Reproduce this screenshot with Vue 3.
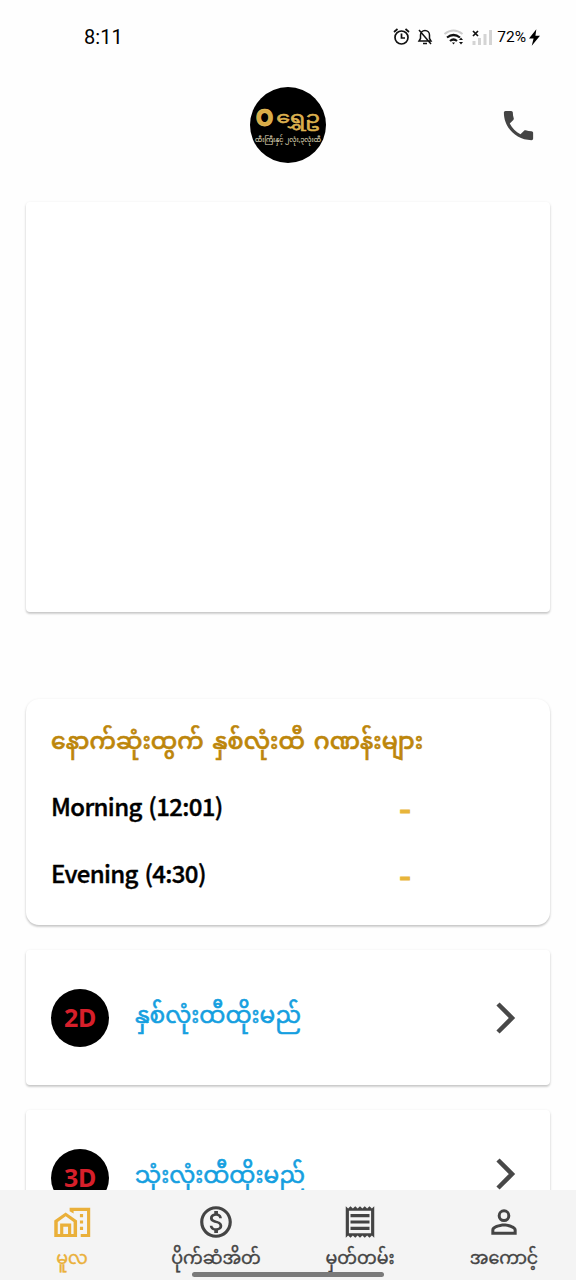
<script setup>
import { ref } from "vue";

const active = ref("home");

const results = [
  { label: "Morning (12:01)", value: "-" },
  { label: "Evening (4:30)", value: "-" },
];

const games = [
  { badge: "2D", title: "နှစ်လုံးထီထိုးမည်" },
  { badge: "3D", title: "သုံးလုံးထီထိုးမည်" },
];

const tabs = [
  {
    id: "home",
    label: "မူလ",
    icon: "M10.500 3H23.500v18.500h-6v-2h4V5h-8.500v1.600L10.500 5.200zM17 7h2v2h-2zM17 11h2v2h-2zM17 15h2v2h-2zM8 6L.8 11v10.500h14.400V11zM13 19.500h-1.500v-6.500H4.500v6.500H3v-7.500l5-3.600L13 12zM6.500 15h3v4.500h-3z",
  },
  {
    id: "bet",
    label: "ပိုက်ဆံအိတ်",
    icon: "M12 2C6.480 2 2 6.480 2 12s4.480 10 10 10 10-4.480 10-10S17.520 2 12 2zm0 18c-4.410 0-8-3.590-8-8s3.590-8 8-8 8 3.590 8 8-3.590 8-8 8zm.310-8.860c-1.770-.450-2.340-.940-2.340-1.670 0-.840.790-1.430 2.100-1.430 1.380 0 1.900.660 1.940 1.640h1.710c-.050-1.340-.870-2.570-2.490-2.970V5H10.900v1.690c-1.510.320-2.720 1.300-2.720 2.810 0 1.790 1.490 2.690 3.660 3.210 1.950.460 2.340 1.150 2.340 1.870 0 .530-.390 1.390-2.100 1.390-1.600 0-2.230-.720-2.320-1.640H8.040c.1 1.700 1.360 2.660 2.860 2.970V19h2.340v-1.670c1.520-.290 2.720-1.160 2.730-2.770-.010-2.200-1.900-2.960-3.660-3.420z",
  },
  {
    id: "history",
    label: "မှတ်တမ်း",
    icon: "M19.500 3.500L18 2l-1.500 1.500L15 2l-1.500 1.500L12 2l-1.500 1.500L9 2 7.500 3.500 6 2 4.500 3.500 3 2v20l1.500-1.500L6 22l1.500-1.500L9 22l1.500-1.500L12 22l1.500-1.500L15 22l1.500-1.500L18 22l1.500-1.500L21 22V2zM19 19.090H5V4.910h14zM6 15h12v2H6zm0-4h12v2H6zm0-4h12v2H6z",
  },
  {
    id: "account",
    label: "အကောင့်",
    icon: "M12 5.900a2.100 2.100 0 110 4.200 2.100 2.100 0 010-4.200m0 9c2.970 0 6.100 1.460 6.100 2.100v1.100H5.900V17c0-.640 3.130-2.100 6.100-2.100M12 4a4 4 0 100 8 4 4 0 000-8zm0 9c-2.670 0-8 1.340-8 4v3h16v-3c0-2.660-5.330-4-8-4z",
  },
];
</script>

<template>
  <div class="screen">
    <div class="status">
      <span class="time">8:11</span>
      <svg class="status-icons" viewBox="0 0 104 24" fill="none" stroke="#111" stroke-width="1.700">
        <circle cx="10.500" cy="12.500" r="6.500" />
        <path d="M10.500 8.500v4.500h3.500M3 7l3.500-3M18 7l-3.500-3" />
        <path d="M28 16h12l-1.500-2.500V10a4.500 4.500 0 00-9 0v3.500zM32 18.500h4M28 5l12 14" stroke-width="1.500" />
        <path d="M53.500 9q9-7 18 0" stroke="#ccc" stroke-width="2" />
        <path d="M56 12.500q6.500-5 13 0M59 16q3.500-3 7 0" stroke-width="2.200" />
        <path d="M61 17.500h3l-1.500 2z" fill="#111" stroke="none" />
        <path d="M68 15l2-2.500 2 2.500zM68 17l2 2.500 2-2.500z" fill="#111" stroke="none" />
        <path d="M82 6l5 5M87 6l-5 5" />
        <path d="M83 16v4M88.500 13v7M94 9v11M99.500 5v15" stroke="#d4d4d4" stroke-width="3" />
      </svg>
      <span class="battery">72%</span>
      <svg class="bolt" viewBox="0 0 12 18"><path d="M8 0L0 10h5l-2 8 9-11H7z" /></svg>
    </div>

    <header class="header">
      <div class="logo">
        <div class="logo-name"><b>ဝ</b><span>ရွှေဥ</span></div>
        <div class="logo-sub">ထီးကြီးနှင့် ၂လုံး,၃လုံးထီ</div>
      </div>
      <svg class="phone" viewBox="0 0 24 24">
        <path d="M6.620 10.790c1.440 2.830 3.760 5.140 6.590 6.590l2.200-2.200c.270-.270.670-.360 1.020-.240 1.120.370 2.330.570 3.570.570.550 0 1 .450 1 1V20c0 .550-.450 1-1 1-9.390 0-17-7.610-17-17 0-.550.450-1 1-1h3.500c.550 0 1 .450 1 1 0 1.250.200 2.450.570 3.570.110.350.030.740-.250 1.020z" />
      </svg>
    </header>

    <div class="card banner"></div>

    <section class="card results">
      <h2>နောက်ဆုံးထွက် နှစ်လုံးထီ ဂဏန်းများ</h2>
      <div v-for="r in results" :key="r.label" class="result">
        <span>{{ r.label }}</span>
        <span class="value">{{ r.value }}</span>
      </div>
    </section>

    <div v-for="g in games" :key="g.badge" class="card game">
      <span class="badge">{{ g.badge }}</span>
      <span class="title">{{ g.title }}</span>
      <svg class="chevron" viewBox="0 0 20 32"><path d="M2 2l14 14L2 30" /></svg>
    </div>

    <nav class="tabs">
      <a v-for="t in tabs" :key="t.id" :class="{ active: t.id === active }" @click="active = t.id">
        <svg viewBox="0 0 24 24"><path :d="t.icon" fill-rule="evenodd" /></svg>
        <span>{{ t.label }}</span>
      </a>
      <i class="handle"></i>
    </nav>
  </div>
</template>

<style>
body {
  background: #fefefe;
}
</style>

<style scoped>
.screen {
  position: relative;
  height: 1280px;
  overflow: hidden;
  font-family: "Noto Sans CJK SC", "Noto Sans Myanmar", Padauk, sans-serif;
  color: #000;
}

.status {
  display: flex;
  align-items: center;
  height: 74px;
  padding: 0 36px 0 84px;
  font-family: Roboto, sans-serif;
}

.time {
  font-size: 20px;
  letter-spacing: 0.1px;
  margin-right: auto;
}

.status-icons {
  width: 104px;
  height: 24px;
  margin-right: 2px;
}

.battery {
  font-size: 15.5px;
  margin-right: 3px;
}

.bolt {
  width: 11px;
  height: 17px;
}

.header {
  display: grid;
  grid-template-columns: 1fr 76px 1fr;
  align-items: center;
  height: 102px;
}

.logo {
  grid-column: 2;
  display: flex;
  flex-direction: column;
  align-items: center;
  box-sizing: border-box;
  width: 76px;
  height: 76px;
  padding-top: 18px;
  border-radius: 50%;
  background: #000;
  overflow: hidden;
  white-space: nowrap;
}

.logo-name {
  display: flex;
  align-items: center;
  height: 22px;
  font-size: 17px;
  line-height: 22px;
  color: #d9ab45;
  transform: scaleX(1.3);
  -webkit-text-stroke: 0.5px #e3bd5c;
}

.logo-name b {
  font-size: 20px;
  transform: scaleY(1.5);
  transform-origin: 50% 70%;
  margin-right: 2px;
}

.logo-sub {
  margin-top: 8px;
  font-size: 6.4px;
  line-height: 9px;
  color: #eee2c4;
}

.phone {
  width: 39px;
  height: 39px;
  justify-self: end;
  margin-right: 38px;
  fill: #444;
}

.card {
  margin: 0 26px 25px;
  background: #fff;
  border-radius: 4px;
  box-shadow: 0 1px 3px rgba(0, 0, 0, 0.14), 0 2px 2px rgba(0, 0, 0, 0.12);
}

.banner {
  height: 410px;
  margin-top: 26px;
  margin-bottom: 87px;
}

.results {
  box-sizing: border-box;
  height: 226px;
  padding: 6px 25px;
  border-radius: 13px;
}

h2 {
  margin: 0;
  height: 67px;
  font-size: 23.6px;
  font-weight: 500;
  line-height: 68px;
  word-spacing: 3.5px;
  color: #bd860b;
  white-space: nowrap;
  -webkit-text-stroke: 0.6px #bd860b;
}

.result {
  display: grid;
  grid-template-columns: 348px 1fr;
  height: 67px;
  line-height: 67px;
  font-size: 24px;
  font-weight: 500;
  letter-spacing: -0.65px;
  word-spacing: 1.8px;
  -webkit-text-stroke: 0.4px #000;
}

.value {
  color: #e8b53a;
  font-size: 34px;
  -webkit-text-stroke: 1px #e8b53a;
  padding-top: 1px;
}

.game {
  display: flex;
  align-items: center;
  box-sizing: border-box;
  height: 135px;
  padding: 0 34px 0 25px;
}

.badge {
  width: 58px;
  height: 58px;
  margin-right: 26px;
  border-radius: 50%;
  background: #000;
  color: #d71f2a;
  font: bold 25px/56px "Noto Sans", sans-serif;
  letter-spacing: -0.4px;
  text-align: center;
}

.title {
  color: #159fe0;
  font-size: 23.2px;
  white-space: nowrap;
  -webkit-text-stroke: 0.6px #159fe0;
}

.chevron {
  width: 20px;
  height: 32px;
  margin-left: auto;
  fill: none;
  stroke: #484848;
  stroke-width: 4.5;
}

.game:nth-last-child(2) .chevron {
  margin-bottom: 7px;
}

/* the bar covers the end of the list */
.tabs {
  position: absolute;
  left: 0;
  right: 0;
  bottom: 0;
  display: grid;
  grid-template-columns: repeat(4, 1fr);
  height: 90px;
  background: #f4f4f4;
}

.tabs a {
  display: flex;
  flex-direction: column;
  align-items: center;
  padding-top: 13px;
  color: #444;
  font-size: 17.5px;
  line-height: 32px;
  white-space: nowrap;
  -webkit-text-stroke: 0.4px currentColor;
}

.tabs svg {
  width: 38px;
  height: 38px;
  fill: currentColor;
  stroke: none;
}

.tabs a.active {
  color: #eab03a;
}

.handle {
  position: absolute;
  left: 192px;
  bottom: 3px;
  width: 192px;
  height: 5px;
  border-radius: 3px;
  background: #7a7a7a;
}
</style>
